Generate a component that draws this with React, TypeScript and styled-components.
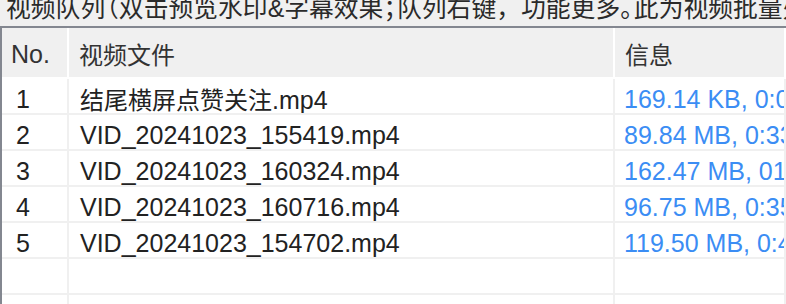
import React from 'react';
import styled, { createGlobalStyle } from 'styled-components';

interface VideoRow {
    id: number;
    name: string;
    cjk?: boolean;
    info: string;
}

const rows: VideoRow[] = [
    { id: 1, name: '结尾横屏点赞关注', cjk: true, info: '169.14 KB, 0:00:05, 1920x1080' },
    { id: 2, name: 'VID_20241023_155419', info: '89.84 MB, 0:33, 1920x1080' },
    { id: 3, name: 'VID_20241023_160324', info: '162.47 MB, 01:02, 1920x1080' },
    { id: 4, name: 'VID_20241023_160716', info: '96.75 MB, 0:35, 1920x1080' },
    { id: 5, name: 'VID_20241023_154702', info: '119.50 MB, 0:41, 1920x1080' },
];

const GlobalStyle = createGlobalStyle`
  html, body {
    margin: 0;
    padding: 0;
    width: 786px;
    height: 304px;
    overflow: hidden;
    background: #ffffff;
  }
  body {
    font-family: "Liberation Sans", "Noto Sans CJK SC", sans-serif;
    color: #222222;
  }
`;

const Page = styled.div`
  display: flex;
  flex-direction: column;
  width: 786px;
  height: 304px;
  overflow: hidden;
`;

const Caption = styled.div`
  display: flex;
  align-items: flex-end;
  height: 26px;
  padding: 0 0 4px 6px;
  box-sizing: border-box;
  background: #f0f0f0;
  color: #2a2a2a;
  font-size: 24.8px;
  line-height: 26px;
  white-space: nowrap;
  overflow: hidden;
`;

// full-width punctuation is drawn half-width in the original
const Punct = styled.span<{ $trim: 'start' | 'end' }>`
  ${p => (p.$trim === 'start' ? 'margin-left: -0.45em;' : 'letter-spacing: -0.45em;')}
`;

const ListView = styled.div`
  flex: 1;
  border-top: 2px solid #838790;
  border-left: 2px solid #838790;
  background: #ffffff;
  overflow: hidden;
`;

const Columns = styled.div`
  display: grid;
  grid-template-columns: 67px 546px 1fr;
`;

const Header = styled(Columns)`
  height: 49px;
  background: #f0f0f0;
`;

const HeadCell = styled.div<{ $pad: number }>`
  box-sizing: border-box;
  padding: 13px 0 0 ${p => p.$pad}px;
  border-right: 2px solid #ffffff;
  font-size: 25px;
  line-height: 26px;
  color: #333333;
  white-space: nowrap;
  overflow: hidden;
`;

const Body = styled.div`
  padding-top: 2px;
`;

const Row = styled(Columns)`
  height: 36px;
`;

const Cell = styled.div<{ $pad: number; $blue?: boolean }>`
  box-sizing: border-box;
  padding: 7px 0 0 ${p => p.$pad}px;
  border-right: 2px solid #f0f0f0;
  border-bottom: 2px solid #f0f0f0;
  font-size: 25px;
  line-height: 26px;
  color: ${p => (p.$blue ? '#3b8df4' : '#222222')};
  white-space: nowrap;
  overflow: hidden;
`;

const Cjk = styled.span`
  font-family: "Noto Sans CJK SC", sans-serif;
  font-size: 24px;
`;

const FileRow = ({ row }: { row: VideoRow }) => (
    <Row>
        <Cell $pad={14}>{row.id}</Cell>
        <Cell $pad={11}>
            {row.cjk ? <Cjk>{row.name}</Cjk> : row.name}.mp4
        </Cell>
        <Cell $pad={9} $blue>{row.info}</Cell>
    </Row>
);

const EmptyRow = () => (
    <Row>
        <Cell $pad={14} />
        <Cell $pad={11} />
        <Cell $pad={9} />
    </Row>
);

export default function App() {
    return (
        <Page>
            <GlobalStyle />
            <Caption>
                视频队列<Punct $trim="start">（</Punct>双击预览水印&amp;字幕效果<Punct $trim="end">；</Punct>
                队列右键，功能更多<Punct $trim="end">。</Punct>此为视频批量处理列表
            </Caption>
            <ListView>
                <Header>
                    <HeadCell $pad={9}>No.</HeadCell>
                    <HeadCell $pad={10}><Cjk>视频文件</Cjk></HeadCell>
                    <HeadCell $pad={10}><Cjk>信息</Cjk></HeadCell>
                </Header>
                <Body>
                    {rows.map(row => (
                        <FileRow row={row} key={row.id} />
                    ))}
                    <EmptyRow />
                    <EmptyRow />
                    <EmptyRow />
                </Body>
            </ListView>
        </Page>
    );
}
